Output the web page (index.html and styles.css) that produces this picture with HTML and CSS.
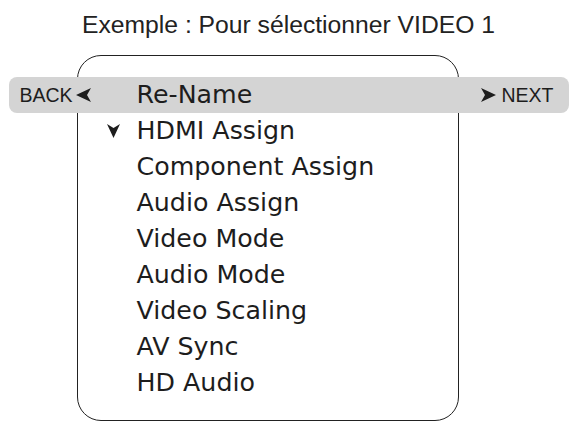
FILE: index.html
```html
<!DOCTYPE html>
<html lang="fr">
<head>
<meta charset="utf-8">
<title>Exemple</title>
<link rel="stylesheet" href="styles.css">
</head>
<body>
<div class="page">
  <h1 class="title">Exemple : Pour sélectionner VIDEO 1</h1>
  <div class="box">
    <div class="bar">
      <div class="bar-left">
        <span class="nav-label">BACK</span>
        <svg class="arrow" width="15" height="14" viewBox="0 0 15 14"><path d="M15 0 L0 7 L15 14 L11 7 Z" fill="#1d1d1d"/></svg>
      </div>
      <span class="bar-item">Re-Name</span>
      <div class="bar-right">
        <svg class="arrow" width="15" height="14" viewBox="0 0 15 14"><path d="M0 0 L15 7 L0 14 L4 7 Z" fill="#1d1d1d"/></svg>
        <span class="nav-label">NEXT</span>
      </div>
    </div>
    <ul class="menu">
      <li class="row"><span class="mark"><svg width="13" height="14" viewBox="0 0 13 14"><path d="M0 0 L6.5 14 L13 0 L6.5 4 Z" fill="#1d1d1d"/></svg></span><span class="label">HDMI Assign</span></li>
      <li class="row"><span class="mark"></span><span class="label">Component Assign</span></li>
      <li class="row"><span class="mark"></span><span class="label">Audio Assign</span></li>
      <li class="row"><span class="mark"></span><span class="label">Video Mode</span></li>
      <li class="row"><span class="mark"></span><span class="label">Audio Mode</span></li>
      <li class="row"><span class="mark"></span><span class="label">Video Scaling</span></li>
      <li class="row"><span class="mark"></span><span class="label">AV Sync</span></li>
      <li class="row"><span class="mark"></span><span class="label">HD Audio</span></li>
    </ul>
  </div>
</div>
</body>
</html>
```
FILE: styles.css
```css
html, body {
  margin: 0;
  padding: 0;
  background: #ffffff;
}

.page {
  width: 570px;
  height: 426px;
  overflow: hidden;
  color: #1d1d1d;
}

.title {
  margin: 11px 0 0 0;
  padding-left: 7px;
  font-family: "Liberation Sans", Arial, sans-serif;
  font-weight: normal;
  font-size: 24.7px;
  line-height: 28px;
  text-align: center;
  color: #222222;
}

.box {
  box-sizing: border-box;
  margin: 16px 0 0 77px;
  width: 382px;
  border: 1.5px solid #222222;
  border-radius: 24px;
  padding: 20.5px 0 19.5px 28.5px;
}

.bar {
  display: flex;
  align-items: center;
  height: 36px;
  margin-left: -98px;
  margin-right: -110.5px;
  background: #d4d4d4;
  border-radius: 8px;
}

.bar-left {
  box-sizing: border-box;
  width: 128px;
  padding-left: 11px;
  display: flex;
  align-items: center;
  gap: 3px;
}

.bar-right {
  display: flex;
  align-items: center;
  gap: 5px;
  padding-right: 15px;
}

.nav-label {
  font-family: "Liberation Sans", Arial, sans-serif;
  font-size: 19.5px;
  line-height: 36px;
  color: #1d1d1d;
}

.arrow {
  display: block;
  margin-top: 1px;
}

.bar-item {
  flex: 1;
  font-family: "DejaVu Sans", Verdana, sans-serif;
  font-size: 25.3px;
  line-height: 36px;
}

.menu {
  list-style: none;
  margin: 0;
  padding: 0;
}

.row {
  display: flex;
  align-items: center;
  height: 36px;
  font-family: "DejaVu Sans", Verdana, sans-serif;
  font-size: 25.3px;
  line-height: 36px;
}

.mark {
  width: 30px;
  display: flex;
  align-items: center;
}

.mark svg {
  display: block;
}
```
